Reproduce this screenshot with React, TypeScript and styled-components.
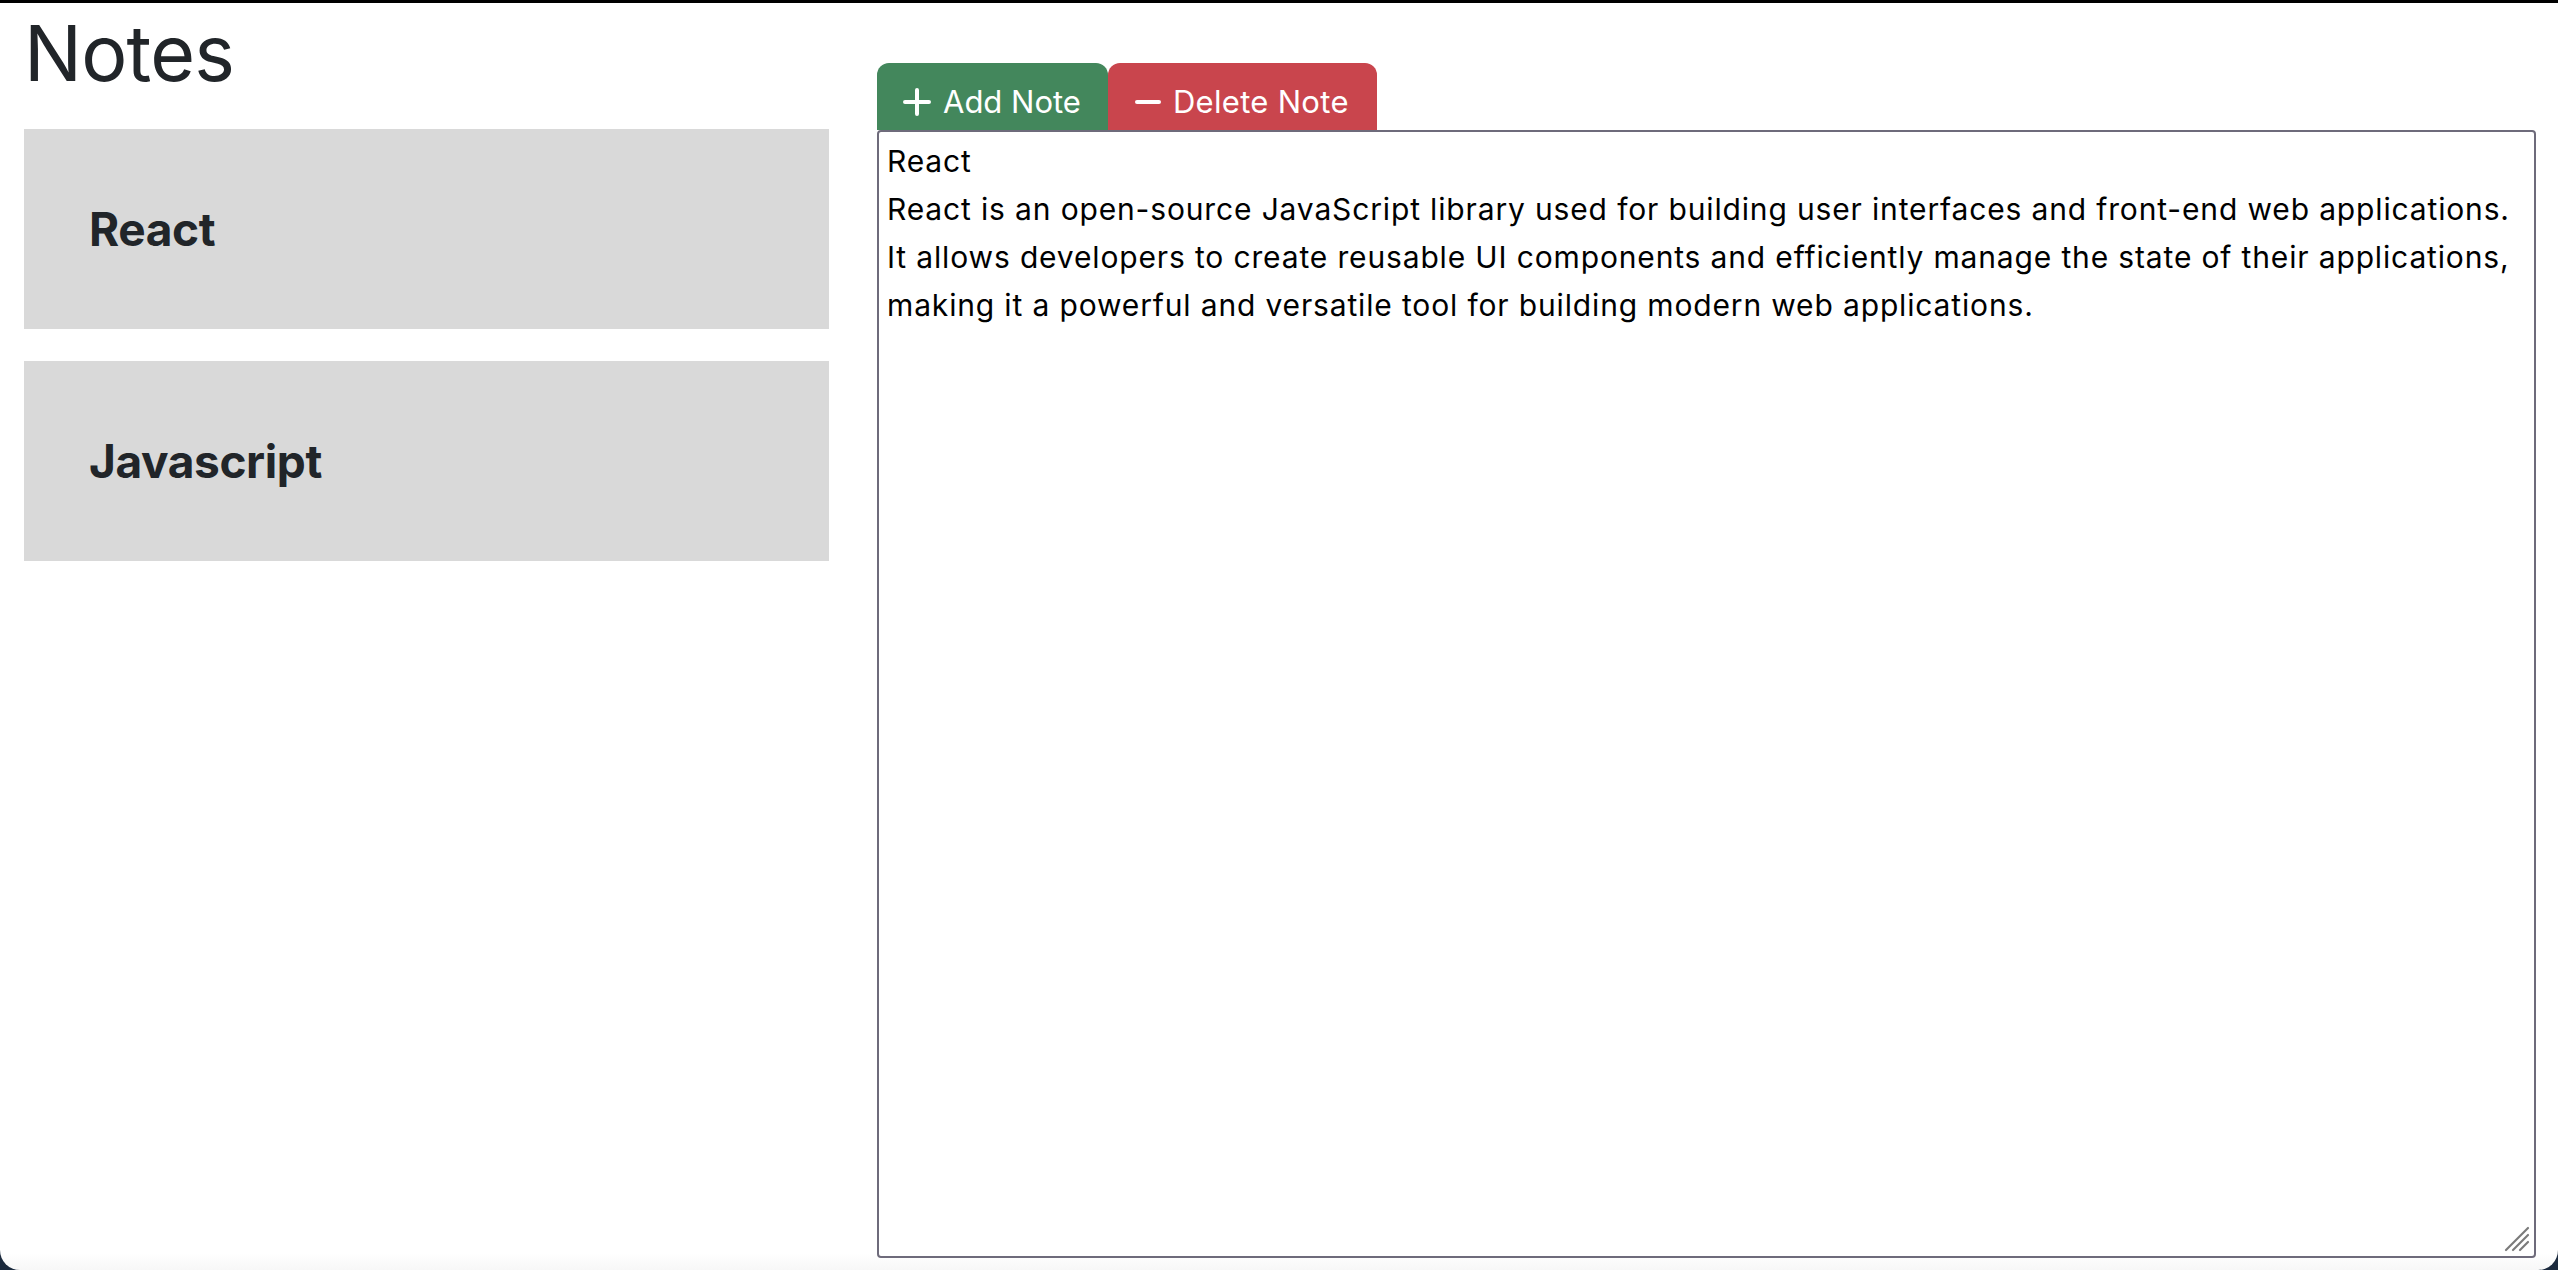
import React from 'react';
import styled, { createGlobalStyle } from 'styled-components';

const GlobalStyle = createGlobalStyle`
  html, body {
    margin: 0;
    padding: 0;
    background: #1b2a3d;
  }
  body {
    font-family: Inter, "Noto Sans", "Liberation Sans", sans-serif;
    color: #212529;
  }
  * {
    box-sizing: border-box;
  }
`;

const Window = styled.div`
  height: 1270px;
  background: linear-gradient(to bottom, #ffffff 0, #ffffff 1250px, #f6f6f6 1270px);
  border-top: 3px solid #000;
  border-radius: 0 0 20px 20px;
  overflow: hidden;
  padding: 0 22px 0 24px;
  display: grid;
  grid-template-columns: 805px 1fr;
  column-gap: 48px;
`;

const Sidebar = styled.aside`
  display: flex;
  flex-direction: column;
`;

const Title = styled.h1`
  margin: 3px 0 29px 0;
  font-size: 77px;
  line-height: 94px;
  font-weight: 400;
  letter-spacing: -0.8px;
  color: #212529;
`;

const NoteList = styled.div`
  display: flex;
  flex-direction: column;
  gap: 32px;
`;

const NoteCard = styled.div<{ $active?: boolean }>`
  height: 200px;
  padding: 2px 0 0 65px;
  display: flex;
  align-items: center;
  background: #d9d9d9;
  cursor: pointer;
`;

const NoteTitle = styled.h3`
  margin: 0;
  font-size: 46px;
  line-height: 1.2;
  font-weight: 700;
  letter-spacing: -0.4px;
  color: #212529;
`;

const Editor = styled.section`
  display: flex;
  flex-direction: column;
  padding-top: 60px;
`;

const Toolbar = styled.div`
  display: flex;
  height: 67px;
`;

const TabButton = styled.button<{ $tone: 'add' | 'delete' }>`
  display: flex;
  align-items: center;
  gap: 12px;
  height: 67px;
  padding: 10px ${(p) => (p.$tone === 'add' ? '27px 0 26px' : '28px 0 27px')};
  border: none;
  border-radius: 12px 12px 0 0;
  background: ${(p) => (p.$tone === 'add' ? '#43875c' : '#c9454d')};
  color: #fff;
  font-family: Inter, "Noto Sans", "Liberation Sans", sans-serif;
  font-size: 31px;
  font-weight: 400;
  letter-spacing: ${(p) => (p.$tone === 'add' ? '0' : '0.3px')};
  cursor: pointer;

  svg {
    flex-shrink: 0;
  }
`;

const BodyFrame = styled.div`
  position: relative;
  height: 1128px;
`;

const NoteBody = styled.textarea`
  display: block;
  height: 100%;
  width: 100%;
  margin: 0;
  padding: 5px 8px;
  border: 2px solid #6e6b7b;
  border-radius: 4px;
  font-family: Inter, "Noto Sans", "Liberation Sans", sans-serif;
  font-size: 30px;
  letter-spacing: 0.85px;
  line-height: 48px;
  color: #000;
  background: #fff;
  white-space: pre;
  overflow: hidden;
  resize: none;
  outline: none;
`;

const Grip = styled.svg`
  position: absolute;
  right: 6px;
  bottom: 6px;
  pointer-events: none;
`;

const PlusIcon = () => (
  <svg width="28" height="28" viewBox="0 0 28 28">
    <path d="M14 2v24M2 14h24" stroke="#fff" strokeWidth="4" strokeLinecap="round" fill="none" />
  </svg>
);

const MinusIcon = () => (
  <svg width="26" height="28" viewBox="0 0 26 28">
    <path d="M2 14h22" stroke="#fff" strokeWidth="4" strokeLinecap="round" fill="none" />
  </svg>
);

const notes = [
  {
    title: 'React',
    body:
      'React\nReact is an open-source JavaScript library used for building user interfaces and front-end web applications.\nIt allows developers to create reusable UI components and efficiently manage the state of their applications,\nmaking it a powerful and versatile tool for building modern web applications.',
  },
  { title: 'Javascript', body: 'Javascript' },
];

export default function App() {
  const [selected, setSelected] = React.useState(0);
  const [text, setText] = React.useState(notes[0].body);

  return (
    <>
      <GlobalStyle />
      <Window>
        <Sidebar>
          <Title>Notes</Title>
          <NoteList>
            {notes.map((n, i) => (
              <NoteCard
                key={n.title}
                $active={i === selected}
                onClick={() => {
                  setSelected(i);
                  setText(n.body);
                }}
              >
                <NoteTitle>{n.title}</NoteTitle>
              </NoteCard>
            ))}
          </NoteList>
        </Sidebar>
        <Editor>
          <Toolbar>
            <TabButton $tone="add">
              <PlusIcon />
              Add Note
            </TabButton>
            <TabButton $tone="delete">
              <MinusIcon />
              Delete Note
            </TabButton>
          </Toolbar>
          <BodyFrame>
            <NoteBody wrap="off" value={text} onChange={(e) => setText(e.target.value)} />
            <Grip width="26" height="26" viewBox="0 0 26 26">
              <g stroke="#7a7a7a" strokeWidth="2.2" strokeLinecap="round">
                <path d="M2 24L24 2" />
                <path d="M9 24L24 9" />
                <path d="M16 24L24 16" />
              </g>
            </Grip>
          </BodyFrame>
        </Editor>
      </Window>
    </>
  );
}
